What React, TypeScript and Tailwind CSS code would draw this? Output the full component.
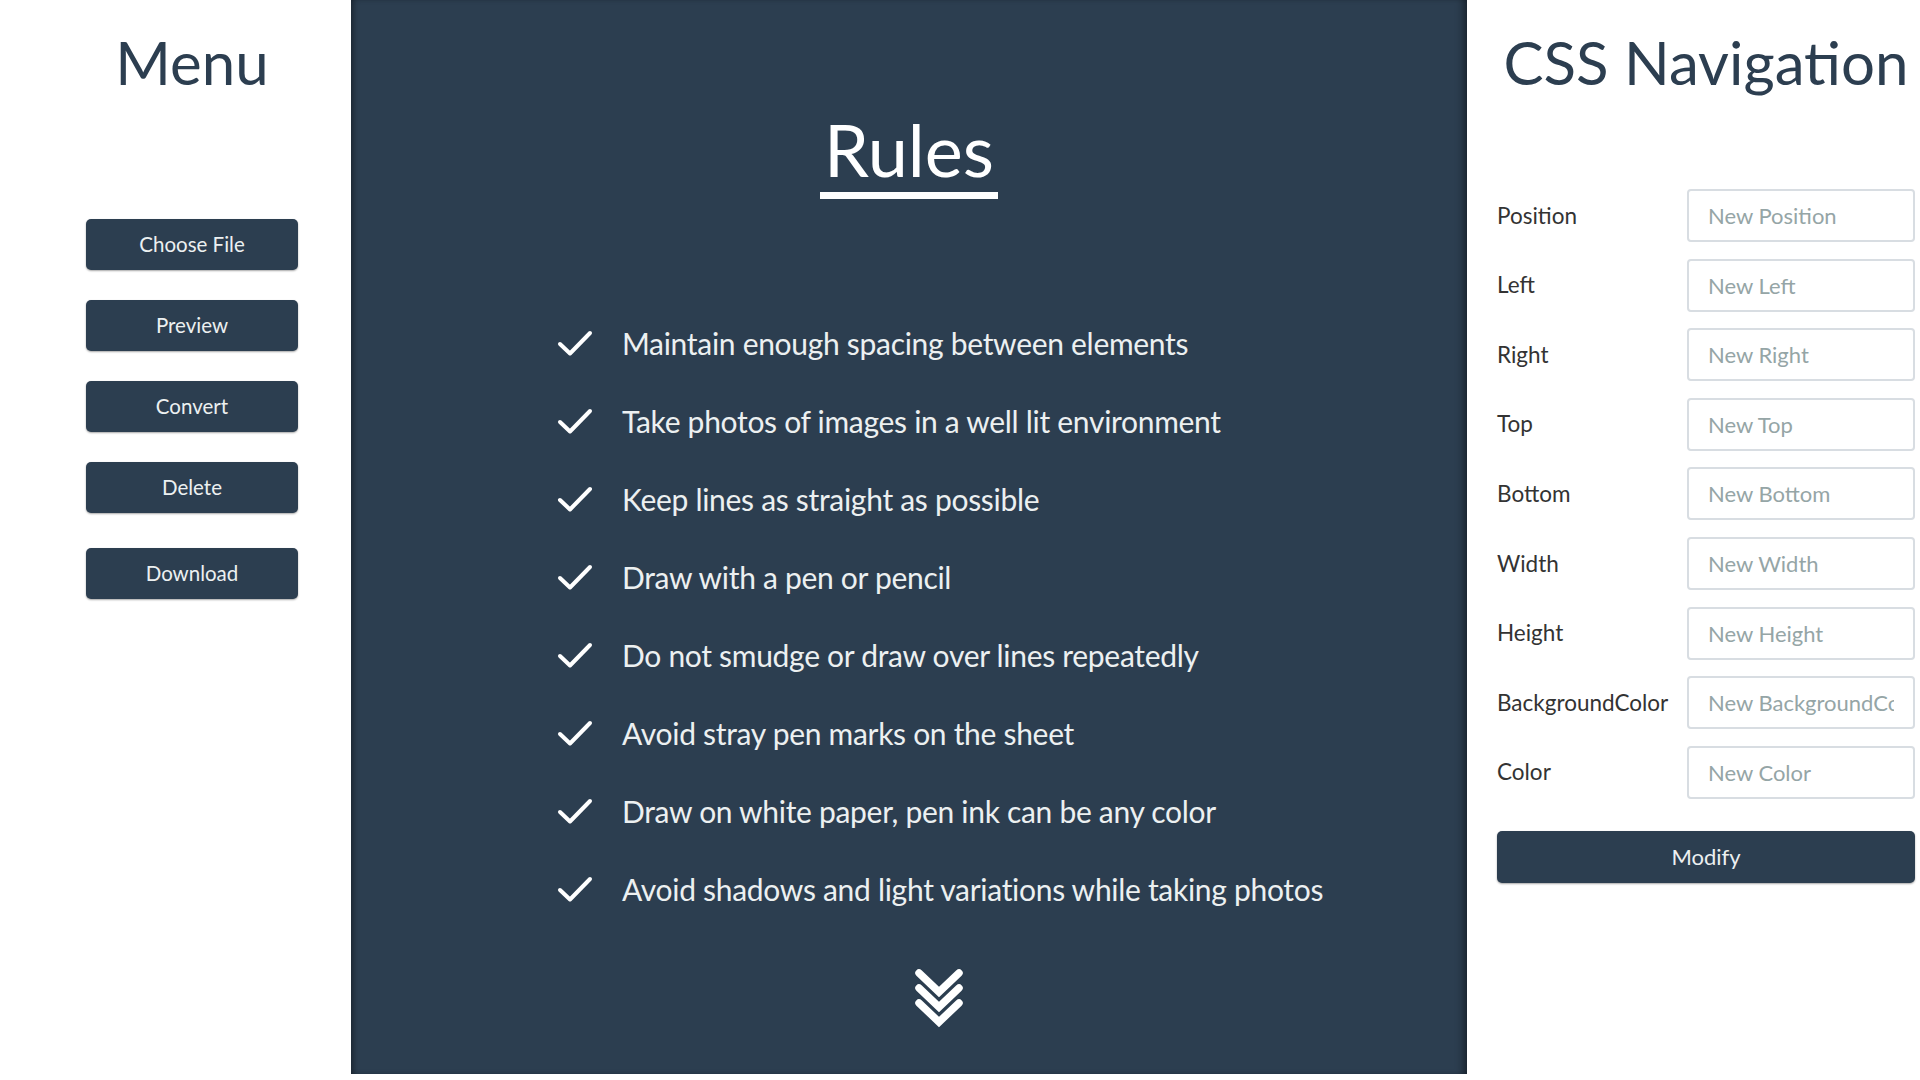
const buttons = ["Choose File", "Preview", "Convert", "Delete", "Download"];

const rules = [
  "Maintain enough spacing between elements",
  "Take photos of images in a well lit environment",
  "Keep lines as straight as possible",
  "Draw with a pen or pencil",
  "Do not smudge or draw over lines repeatedly",
  "Avoid stray pen marks on the sheet",
  "Draw on white paper, pen ink can be any color",
  "Avoid shadows and light variations while taking photos",
];

const fields = [
  "Position",
  "Left",
  "Right",
  "Top",
  "Bottom",
  "Width",
  "Height",
  "BackgroundColor",
  "Color",
];

const Check = () => (
  <svg width="36" height="27" viewBox="0 0 36 27" fill="none">
    <polyline
      points="3,14 13,23.5 33,3"
      stroke="#ffffff"
      strokeWidth="4"
      strokeLinecap="round"
      strokeLinejoin="round"
    />
  </svg>
);

const Chevrons = () => (
  <svg width="50" height="60" viewBox="0 0 50 60" fill="none">
    {[0, 15, 30].map((dy) => (
      <g key={dy}>
        <polyline
          points={`5,${5 + dy} 25,${24 + dy} 45,${5 + dy}`}
          stroke="#2c3e50"
          strokeWidth="11"
          strokeLinecap="round"
          strokeLinejoin="round"
        />
        <polyline
          points={`5,${5 + dy} 25,${24 + dy} 45,${5 + dy}`}
          stroke="#ffffff"
          strokeWidth="7.5"
          strokeLinecap="round"
          strokeLinejoin="miter"
        />
      </g>
    ))}
  </svg>
);

export default function App() {
  return (
    <div className="flex w-[1920px] h-[1080px] bg-white font-['Lato','Liberation_Sans',sans-serif]">
      {/* menu column */}
      <aside className="w-[351px] shrink-0">
        <div className="ml-[86px] w-[212px] flex flex-col items-center">
          <h2 className="mt-[32px] text-[60px] leading-none text-[#2c3e50] whitespace-nowrap">
            Menu
          </h2>
          <div className="mt-[127px] flex flex-col gap-[30px] w-full">
            {buttons.map((b) => (
              <button
                key={b}
                className={`h-[51px] w-full rounded-[5px] bg-[#2c3e50] text-[20.5px] text-[#ecf0f1] shadow-[0_1px_2px_rgba(0,0,0,0.35)] ${
                  b === "Download" ? "mt-[5px]" : ""
                }`}
              >
                {b}
              </button>
            ))}
          </div>
        </div>
      </aside>

      {/* rules panel */}
      <main className="w-[1116px] h-[1074px] shrink-0 bg-[#2c3e50] shadow-[inset_6px_0_6px_-4px_rgba(0,0,0,0.45),inset_-8px_0_8px_-5px_rgba(0,0,0,0.5)] flex flex-col">
        <div className="flex justify-center mt-[113px]">
          <h1 className="inline-block text-[72px] leading-none text-white px-[4px] pb-[7px] border-b-[7px] border-white">
            Rules
          </h1>
        </div>
        <ul className="mt-[105px] pl-[206px] flex flex-col">
          {rules.map((r) => (
            <li key={r} className="h-[78px] flex items-center gap-[29px]">
              <Check />
              <span className="text-[30px] text-[#ecf0f1] whitespace-nowrap tracking-[-0.3px]">
                {r}
              </span>
            </li>
          ))}
        </ul>
        <div className="pl-[563px] mt-[40px]">
          <Chevrons />
        </div>
      </main>

      {/* css navigation panel */}
      <section className="flex-1 pl-[30px] pr-[5px]">
        <div className="w-[418px] flex flex-col">
          <h2 className="mt-[32px] text-[60px] leading-none text-[#2c3e50] text-center whitespace-nowrap">
            CSS Navigation
          </h2>
          <form className="mt-[97px] flex flex-col gap-[16.6px]">
            {fields.map((f) => (
              <div key={f} className="flex items-center">
                <label className="w-[190px] text-[22.5px] text-[#333]">{f}</label>
                <input
                  placeholder={`New ${f}`}
                  className="w-[228px] h-[53px] rounded-[4px] border-2 border-[#d8dde2] pl-[19px] pr-[19px] text-[22px] text-[#333] placeholder:text-[#95a5a6] outline-none"
                />
              </div>
            ))}
            <button
              type="button"
              className="mt-[15.4px] h-[52px] w-full rounded-[5px] bg-[#2c3e50] text-[22px] text-[#ecf0f1] shadow-[0_1px_2px_rgba(0,0,0,0.35)]"
            >
              Modify
            </button>
          </form>
        </div>
      </section>
    </div>
  );
}
